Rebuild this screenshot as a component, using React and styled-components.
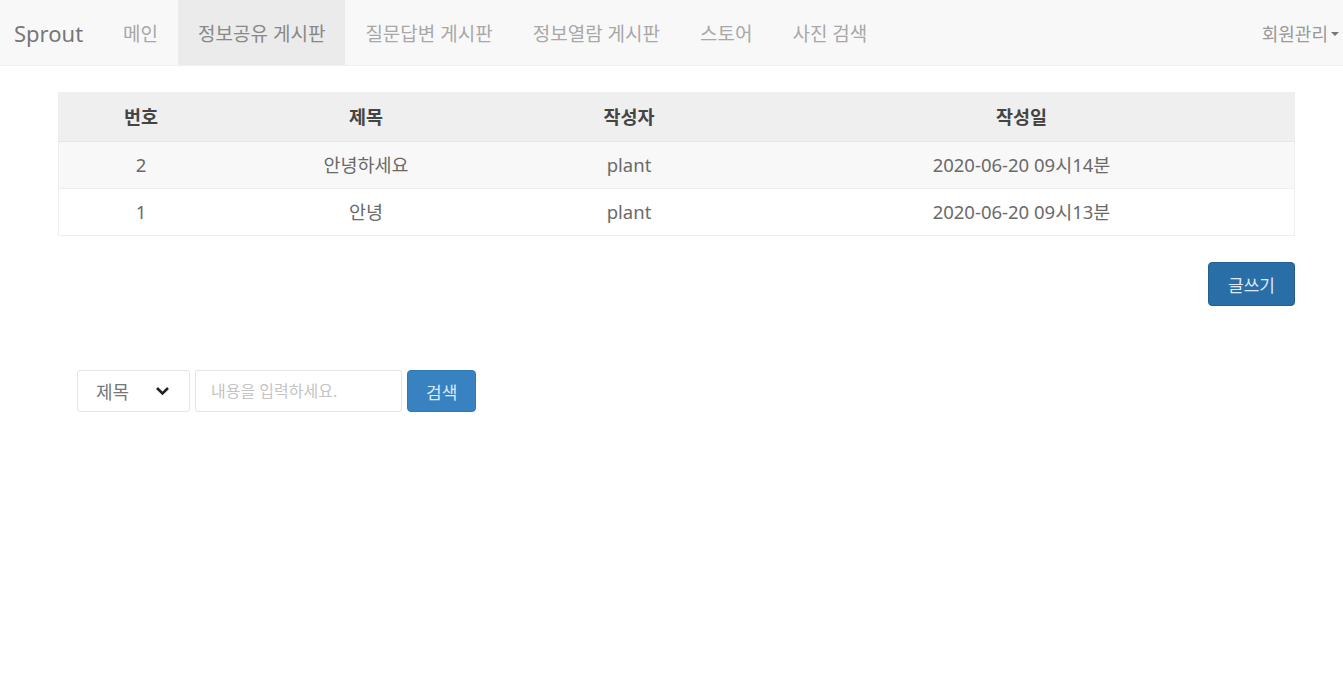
import React from "react";
import styled, { createGlobalStyle } from "styled-components";

const GlobalStyle = createGlobalStyle`
  body {
    margin: 0;
    background: #fff;
    font-family: "Noto Sans", "Noto Sans CJK KR", sans-serif;
    color: #555;
  }
`;

const Navbar = styled.nav`
  height: 66px;
  background: #f8f8f8;
  border-bottom: 1px solid #f0f0f0;
  display: flex;
  align-items: stretch;
  padding-left: 14px;
  box-sizing: border-box;
`;

const Brand = styled.div`
  display: flex;
  align-items: center;
  font-size: 22px;
  color: #777;
  padding-right: 20px;
`;

const NavItem = styled.div`
  display: flex;
  align-items: center;
  padding: 0 20px;
  font-size: 19px;
  background: ${p => (p.active ? "#ebebeb" : "transparent")};
  color: ${p => (p.active ? "#888" : "#a8a8a8")};
`;

const Spacer = styled.div`
  flex: 1;
`;

const UserMenu = styled.div`
  display: flex;
  align-items: center;
  font-size: 18px;
  color: #999;
  padding-right: 4px;
`;

const Caret = styled.span`
  width: 0;
  height: 0;
  border-left: 4px solid transparent;
  border-right: 4px solid transparent;
  border-top: 4px solid #777;
  margin-left: 3px;
  margin-top: 2px;
`;

const Content = styled.main`
  padding: 26px 48px 0 58px;
`;

const Table = styled.table`
  width: 1237px;
  table-layout: fixed;
  border-collapse: collapse;
  border: 1px solid #eee;
  font-size: 18.5px;
  line-height: 20px;
`;

const Th = styled.th`
  height: 48px;
  padding: 0;
  background: #efefef;
  color: #444;
  font-weight: 700;
  text-align: center;
  width: ${p => p.w};
  border-bottom: 1px solid #e6e6e6;
`;

const Row = styled.tr`
  background: ${p => (p.striped ? "#f8f8f8" : "#fff")};
`;

const Td = styled.td`
  height: 46px;
  padding: 0;
  text-align: center;
  color: #6a6a6a;
  border-top: 1px solid #eee;
`;

const WriteBar = styled.div`
  width: 1237px;
  display: flex;
  justify-content: flex-end;
  margin-top: 26px;
`;

const Button = styled.button`
  background: ${p => (p.bright ? "#3882c2" : "#2a6ea8")};
  color: #dde9f5;
  border: 1px solid ${p => (p.bright ? "#3078b4" : "#255f92")};
  border-radius: 4px;
  font-family: inherit;
  font-size: 17px;
  height: ${p => p.h};
  padding: 0 ${p => p.px};
`;

const SearchBar = styled.form`
  display: flex;
  align-items: center;
  gap: 5px;
  margin: 64px 0 0 19px;
`;

const SelectBox = styled.div`
  width: 113px;
  height: 42px;
  box-sizing: border-box;
  border: 1px solid #e4e4e4;
  border-radius: 3px;
  display: flex;
  align-items: center;
  justify-content: space-between;
  padding: 0 19px 0 18px;
  font-size: 18px;
  color: #777;
`;

const Input = styled.input`
  width: 207px;
  height: 42px;
  box-sizing: border-box;
  border: 1px solid #e4e4e4;
  border-radius: 3px;
  padding: 0 15px;
  font-family: inherit;
  font-size: 16px;
  &::placeholder {
    color: #c4c4c4;
  }
`;

const rows = [
  { id: 2, title: "안녕하세요", author: "plant", date: "2020-06-20 09시14분" },
  { id: 1, title: "안녕", author: "plant", date: "2020-06-20 09시13분" },
];

export default function App() {
  return (
    <>
      <GlobalStyle />
      <Navbar>
        <Brand>Sprout</Brand>
        <NavItem>메인</NavItem>
        <NavItem active>정보공유 게시판</NavItem>
        <NavItem>질문답변 게시판</NavItem>
        <NavItem>정보열람 게시판</NavItem>
        <NavItem>스토어</NavItem>
        <NavItem>사진 검색</NavItem>
        <Spacer />
        <UserMenu>
          회원관리
          <Caret />
        </UserMenu>
      </Navbar>
      <Content>
        <Table>
          <thead>
            <tr>
              <Th w="164px">번호</Th>
              <Th w="286px">제목</Th>
              <Th w="240px">작성자</Th>
              <Th>작성일</Th>
            </tr>
          </thead>
          <tbody>
            {rows.map((r, i) => (
              <Row key={r.id} striped={i % 2 === 0}>
                <Td>{r.id}</Td>
                <Td>{r.title}</Td>
                <Td>{r.author}</Td>
                <Td>{r.date}</Td>
              </Row>
            ))}
          </tbody>
        </Table>
        <WriteBar>
          <Button h="44px" px="19px">글쓰기</Button>
        </WriteBar>
        <SearchBar onSubmit={e => e.preventDefault()}>
          <SelectBox>
            제목
            <svg width="15" height="10" viewBox="0 0 15 10">
              <path d="M2 2 L7.5 7.5 L13 2" fill="none" stroke="#222" strokeWidth="2.6" />
            </svg>
          </SelectBox>
          <Input placeholder="내용을 입력하세요." />
          <Button bright h="42px" px="18px">검색</Button>
        </SearchBar>
      </Content>
    </>
  );
}
